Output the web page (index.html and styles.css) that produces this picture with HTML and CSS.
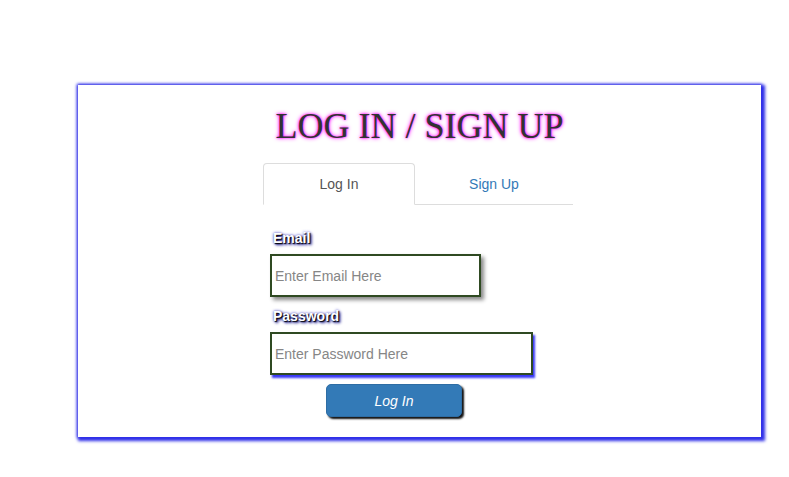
FILE: index.html
```html
<!DOCTYPE html>
<html>
<head>
<meta charset="utf-8">
<link rel="stylesheet" href="styles.css">
</head>
<body>
<div class="card">
  <h1 class="title">LOG IN / SIGN UP</h1>
  <div class="panel">
    <ul class="tabs">
      <li class="tab active">Log In</li>
      <li class="tab">Sign Up</li>
    </ul>
    <form class="form">
      <label class="lbl lbl-email">Email</label>
      <input class="field field-email" type="text" placeholder="Enter Email Here">
      <label class="lbl lbl-pass">Password</label>
      <input class="field field-pass" type="password" placeholder="Enter Password Here" autofocus>
      <button class="btn" type="button">Log In</button>
    </form>
  </div>
</div>
</body>
</html>
```

FILE: styles.css
```css
html, body {
  margin: 0;
  padding: 0;
  background: #fff;
}
body {
  padding: 85px 0 40px 78px;
  min-height: 477px;
  box-sizing: border-box;
  font-family: "Liberation Sans", Arial, sans-serif;
  font-size: 14px;
}
.card {
  width: 683px;
  height: 352px;
  box-sizing: border-box;
  background: #fff;
  box-shadow: 2px 2px 3px 2px rgb(48, 48, 232), 0 0 3px 1px rgb(48, 48, 232);
  padding-top: 21px;
}
.title {
  margin: 0;
  font-family: "Liberation Serif", "Times New Roman", serif;
  font-weight: normal;
  font-size: 36px;
  line-height: 40px;
  color: #333;
  text-align: center;
  text-shadow: 0 0 2px #ff00ff, 0 0 4px #ff00ff;
}
.panel {
  margin-left: 185px;
  width: 310px;
  margin-top: 17px;
}
.tabs {
  list-style: none;
  margin: 0;
  padding: 0;
  display: flex;
  border-bottom: 1px solid #ddd;
}
.tab {
  box-sizing: border-box;
  height: 42px;
  line-height: 40px;
  text-align: center;
  color: #337ab7;
  margin-bottom: -1px;
  border: 1px solid transparent;
  border-radius: 4px 4px 0 0;
  flex: 1 1 0;
}
.tab.active {
  flex: 0 0 152px;
  color: #555;
  background: #fff;
  border-color: #ddd;
  border-bottom-color: transparent;
}
.form {
  display: flex;
  flex-direction: column;
  align-items: flex-start;
  padding-left: 7px;
  margin: 0;
}
.lbl {
  display: block;
  font-weight: bold;
  line-height: 20px;
  color: #fff;
  padding-left: 3px;
  text-shadow: 1px 1px 1px #000, 2px 2px 3px #000080, 0 0 3px #3030c0;
}
.lbl-email {
  margin-top: 23px;
}
.lbl-pass {
  margin-top: 9px;
}
.field {
  box-sizing: border-box;
  height: 43px;
  margin-top: 6px;
  padding: 0 3px;
  border: 2px solid #2f4a22;
  font-family: "Liberation Sans", Arial, sans-serif;
  font-size: 14px;
  color: #333;
  background: #fff;
  outline: none;
}
.field::placeholder {
  color: #868686;
}
.field-email {
  width: 211px;
  box-shadow: 3px 3px 4px #8a8a8a;
}
.field-pass {
  width: 263px;
  box-shadow: 2px 3px 2px #3838f4;
  caret-color: #222;
}
.btn {
  margin-top: 9px;
  margin-left: 56px;
  width: 136px;
  height: 33px;
  box-sizing: border-box;
  background: #337ab7;
  border: 1px solid #2e6da4;
  border-radius: 5px;
  color: #fff;
  font-family: "Liberation Sans", Arial, sans-serif;
  font-size: 14px;
  font-style: italic;
  box-shadow: 2px 2px 2px #111;
  padding: 0;
}
```
